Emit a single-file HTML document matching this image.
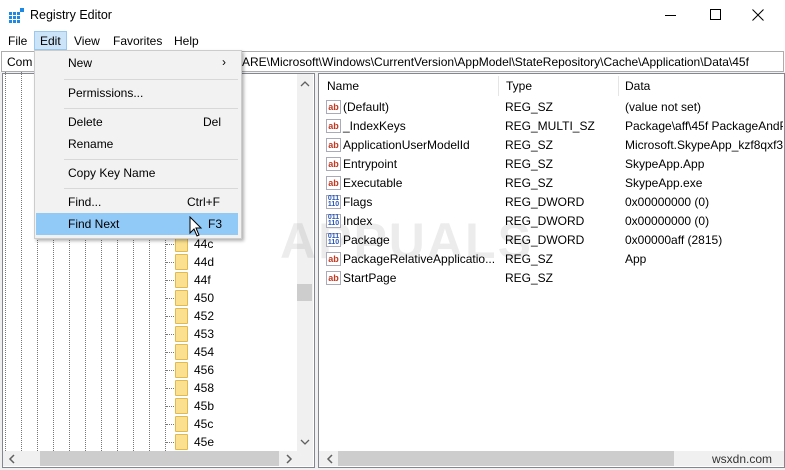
<!DOCTYPE html>
<html><head><meta charset="utf-8"><style>
*{margin:0;padding:0;box-sizing:border-box}
body{width:785px;height:470px;overflow:hidden;background:#fff;font-family:"Liberation Sans",sans-serif;font-size:12px;color:#000;position:relative}
.a{position:absolute;white-space:nowrap}
.dl{position:absolute;top:72px;height:379px;width:0;border-left:1px dotted #777}
.fold{position:absolute;left:175px;width:13px;height:16px;background:#fbe08f;border:1px solid #e0b94f;border-radius:1px}
.ic{position:absolute;left:326px;width:15px;height:14px;border:1px solid #aab;background:#fff;font-size:9px;font-weight:bold;line-height:12px;text-align:center}
.ab{color:#c4371f}
.bin{color:#2b57b8;font-size:7px;line-height:6px}
.mi{position:absolute;left:68px}
.sep{position:absolute;left:64px;width:174px;height:1px;background:#d8d8d8}
</style></head><body>
<div class="a" style="left:9px;top:8px;width:15px;height:15px">
<svg width="15" height="15"><rect x="0" y="4" width="3" height="3" fill="#1e88e5"/><rect x="4" y="4" width="3" height="3" fill="#1e88e5"/><rect x="8" y="4" width="3" height="3" fill="#1e88e5"/><rect x="0" y="8" width="3" height="3" fill="#1e88e5"/><rect x="4" y="8" width="3" height="3" fill="#1e88e5"/><rect x="8" y="8" width="3" height="3" fill="#1e88e5"/><rect x="0" y="12" width="3" height="3" fill="#1e88e5"/><rect x="4" y="12" width="3" height="3" fill="#1e88e5"/><rect x="8" y="12" width="3" height="3" fill="#1e88e5"/><rect x="11" y="0" width="4" height="4" fill="#1e88e5"/></svg></div>
<div class="a" style="left:30px;top:8px;font-size:12.5px">Registry Editor</div>
<div class="a" style="left:665px;top:15px;width:11px;height:1px;background:#000"></div>
<div class="a" style="left:710px;top:9px;width:11px;height:11px;border:1px solid #000"></div>
<svg class="a" style="left:752px;top:9px" width="12" height="12"><path d="M0.5 0.5L11.5 11.5M11.5 0.5L0.5 11.5" stroke="#000" stroke-width="1"/></svg>
<div class="a" style="left:34px;top:31px;width:33px;height:19px;background:#cce4f7;border:1px solid #99c9ef"></div>
<div class="a" style="left:8px;top:34px">File</div>
<div class="a" style="left:40px;top:34px">Edit</div>
<div class="a" style="left:74px;top:34px">View</div>
<div class="a" style="left:113px;top:34px">Favorites</div>
<div class="a" style="left:174px;top:34px">Help</div>
<div class="a" style="left:1px;top:51px;width:783px;height:21px;border:1px solid #adadad;background:#fff"></div>
<div class="a" style="left:7px;top:55px">Com</div>
<div class="a" style="left:242px;top:55px">ARE\Microsoft\Windows\CurrentVersion\AppModel\StateRepository\Cache\Application\Data\45f</div>
<div class="a" style="left:0;top:72px;width:785px;height:398px;background:#f0f0f0"></div>
<div class="a" style="left:2px;top:73px;width:313px;height:395px;background:#fff;border:1px solid #828790"></div>
<div class="a" style="left:318px;top:73px;width:467px;height:395px;background:#fff;border:1px solid #828790"></div>
<div class="dl" style="left:5px"></div><div class="dl" style="left:21px"></div><div class="dl" style="left:37px"></div><div class="dl" style="left:53px"></div><div class="dl" style="left:69px"></div><div class="dl" style="left:85px"></div><div class="dl" style="left:101px"></div><div class="dl" style="left:117px"></div><div class="dl" style="left:133px"></div><div class="dl" style="left:149px"></div><div class="dl" style="left:165px"></div>
<div id="tree"></div>
<div class="a" style="left:297px;top:74px;width:16px;height:377px;background:#f0f0f0"></div>
<div class="a" style="left:297px;top:284px;width:15px;height:17px;background:#cdcdcd"></div>
<svg class="a" style="left:300px;top:80px" width="10" height="8"><path d="M1 6L5 2L9 6" fill="none" stroke="#606060" stroke-width="1.3"/></svg>
<svg class="a" style="left:300px;top:438px" width="10" height="8"><path d="M1 2L5 6L9 2" fill="none" stroke="#606060" stroke-width="1.3"/></svg>
<div class="a" style="left:3px;top:451px;width:294px;height:15px;background:#f0f0f0"></div>
<div class="a" style="left:40px;top:451px;width:239px;height:15px;background:#cdcdcd"></div>
<svg class="a" style="left:8px;top:454px" width="8" height="10"><path d="M6 1L2 5L6 9" fill="none" stroke="#606060" stroke-width="1.5"/></svg>
<svg class="a" style="left:285px;top:454px" width="8" height="10"><path d="M2 1L6 5L2 9" fill="none" stroke="#606060" stroke-width="1.5"/></svg>
<div class="a" style="left:297px;top:451px;width:16px;height:15px;background:#f0f0f0"></div>
<div class="a" style="left:498px;top:76px;width:1px;height:20px;background:#e5e5e5"></div>
<div class="a" style="left:618px;top:76px;width:1px;height:20px;background:#e5e5e5"></div>
<div class="a" style="left:327px;top:79px">Name</div>
<div class="a" style="left:506px;top:79px">Type</div>
<div class="a" style="left:625px;top:79px">Data</div>
<div class="a" style="left:280px;top:212px;font-size:50px;font-weight:bold;color:#000;opacity:.07;letter-spacing:2px">APPUALS</div>
<div id="vals"></div>
<div class="a" style="left:319px;top:451px;width:465px;height:15px;background:#f0f0f0"></div>
<div class="a" style="left:338px;top:451px;width:336px;height:15px;background:#cdcdcd"></div>
<svg class="a" style="left:326px;top:454px" width="8" height="10"><path d="M6 1L2 5L6 9" fill="none" stroke="#606060" stroke-width="1.5"/></svg>
<div class="a" style="left:712px;top:452px;font-size:12px;color:#333">wsxdn.com</div>
<div class="a" style="left:34px;top:50px;width:208px;height:189px;background:#f2f2f2;border:1px solid #ccc;box-shadow:2px 2px 3px rgba(0,0,0,.3)"></div>
<div class="a" style="left:36px;top:213px;width:202px;height:22px;background:#91c9f7"></div>
<div class="mi" style="top:56px">New</div><div class="a" style="left:222px;top:55px;font-size:12px">›</div>
<div class="sep" style="top:79px"></div>
<div class="mi" style="top:86px">Permissions...</div>
<div class="sep" style="top:108px"></div>
<div class="mi" style="top:115px">Delete</div><div class="a" style="left:203px;top:115px">Del</div>
<div class="mi" style="top:137px">Rename</div>
<div class="sep" style="top:159px"></div>
<div class="mi" style="top:166px">Copy Key Name</div>
<div class="sep" style="top:188px"></div>
<div class="mi" style="top:195px">Find...</div><div class="a" style="left:187px;top:195px">Ctrl+F</div>
<div class="mi" style="top:217px">Find Next</div><div class="a" style="left:208px;top:217px">F3</div>
<svg class="a" style="left:189px;top:216px" width="14" height="22"><path d="M1 1 L1 17 L5 13 L8 20 L10 19 L7 12 L12 12 Z" fill="#fff" stroke="#000" stroke-width="1"/></svg>
<script>
var t="",names=["44c","44d","44f","450","452","453","454","456","458","45b","45c","45e"];
names.forEach(function(n,i){var y=236+i*18;t+='<div class="a" style="left:166px;top:'+(y+8)+'px;width:8px;border-top:1px dotted #777"></div><div class="fold" style="top:'+y+'px"></div><div class="a" style="left:194px;top:'+(y+1)+'px">'+n+'</div>';});
document.getElementById("tree").innerHTML=t;
var v=[["(Default)","REG_SZ","(value not set)",0],["_IndexKeys","REG_MULTI_SZ","Package\\aff\\45f PackageAndP",0],["ApplicationUserModelId","REG_SZ","Microsoft.SkypeApp_kzf8qxf38",0],["Entrypoint","REG_SZ","SkypeApp.App",0],["Executable","REG_SZ","SkypeApp.exe",0],["Flags","REG_DWORD","0x00000000 (0)",1],["Index","REG_DWORD","0x00000000 (0)",1],["Package","REG_DWORD","0x00000aff (2815)",1],["PackageRelativeApplicatio...","REG_SZ","App",0],["StartPage","REG_SZ","",0]];
var s="";v.forEach(function(r,i){var y=100+i*19;s+='<div class="ic '+(r[3]?'bin':'ab')+'" style="top:'+y+'px">'+(r[3]?'011<br>110':'ab')+'</div><div class="a" style="left:343px;top:'+y+'px">'+r[0]+'</div><div class="a" style="left:505px;top:'+y+'px">'+r[1]+'</div><div class="a" style="left:625px;top:'+y+'px;width:158px;overflow:hidden">'+r[2]+'</div>';});
document.getElementById("vals").innerHTML=s;
</script>
</body></html>
